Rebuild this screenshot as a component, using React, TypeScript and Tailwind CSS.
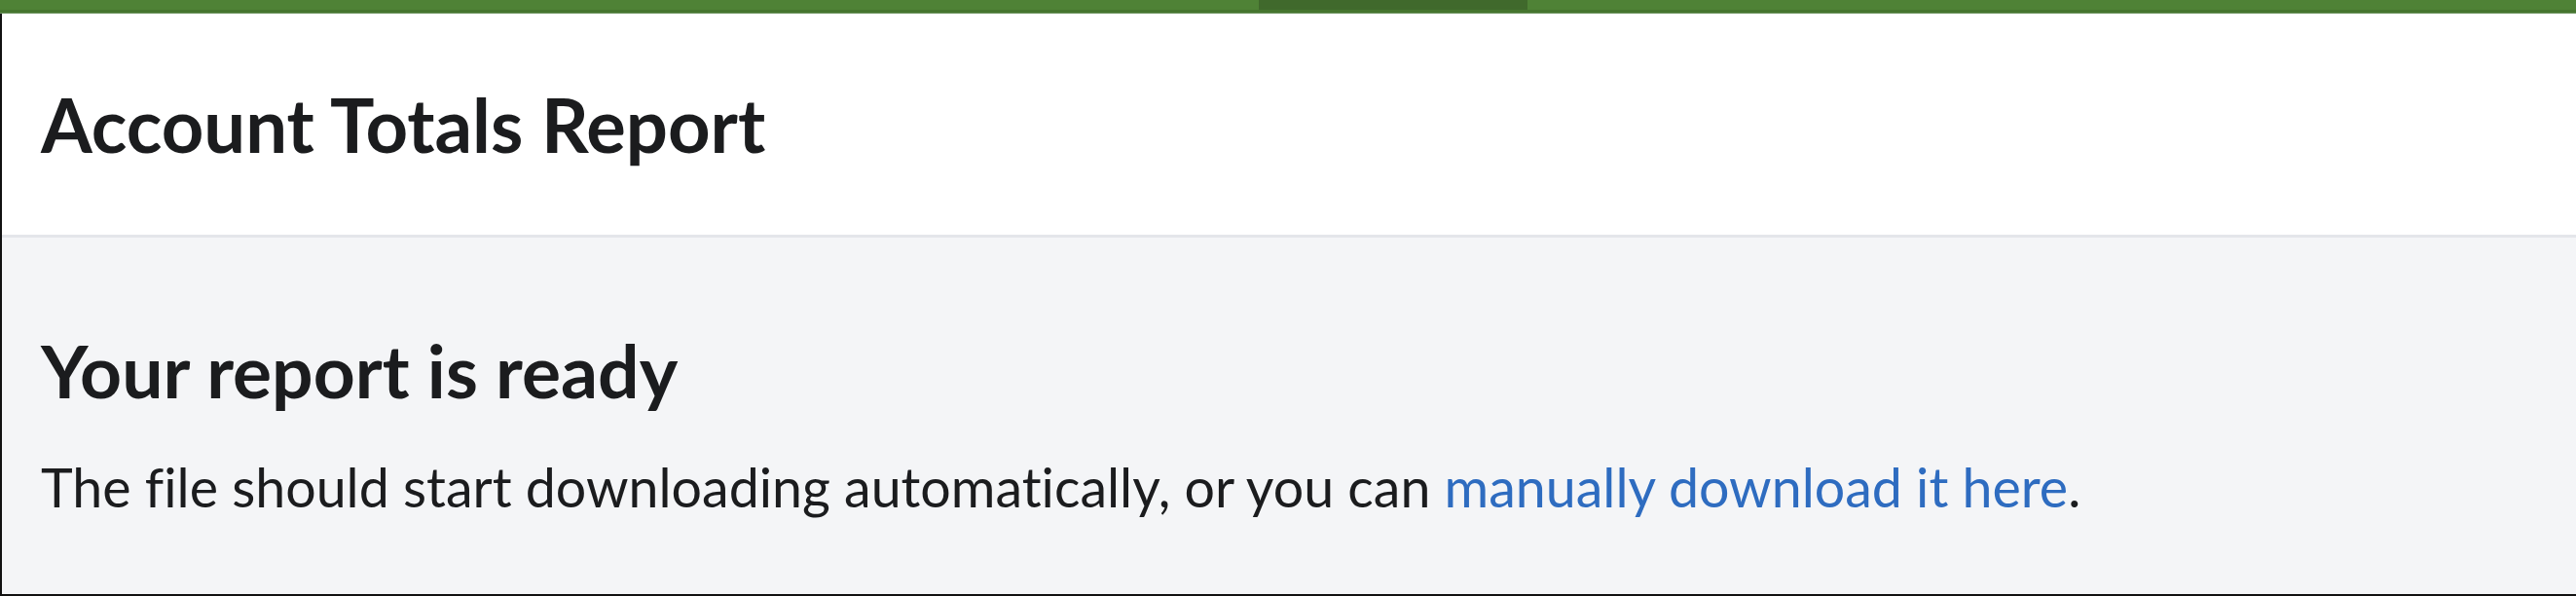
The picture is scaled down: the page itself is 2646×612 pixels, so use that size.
export default function App() {
  return (
    <div className="w-full h-[612px] flex flex-col bg-white [font-variant-ligatures:none]" style={{ fontFamily: 'Lato, "Liberation Sans", sans-serif' }}>
      {/* Top nav strip */}
      <div className="flex flex-col shrink-0">
        <div className="h-[10px] flex bg-[#4f8236]">
          <div className="w-[1293px]" />
          <div className="w-[276px] bg-[#40692c]" />
        </div>
        <div className="h-[3px] bg-[#46752f]" />
        <div className="h-px bg-[#6d9460]" />
      </div>

      <div className="flex-1 flex flex-col border-l-2 border-b-2 border-[#111]">
        {/* Page header */}
        <div className="h-[230px] flex items-center px-[40px] bg-white border-b-[3px] border-[#e4e6ea]">
          <h1 className="text-[76px] font-bold leading-none text-[#1b1c1e]">Account Totals Report</h1>
        </div>

        {/* Body */}
        <div className="flex-1 bg-[#f4f5f7] px-[40px] pt-[99px]">
          <h2 className="text-[75px] font-bold leading-none text-[#1b1c1e]">Your report is ready</h2>
          <p className="mt-[54px] text-[55.5px] leading-none text-[#1b1c1e]">
            The file should start downloading automatically, or you can{' '}
            <a href="#" className="text-[#2e6cc0]">manually download it here</a>.
          </p>
        </div>
      </div>
    </div>
  );
}
